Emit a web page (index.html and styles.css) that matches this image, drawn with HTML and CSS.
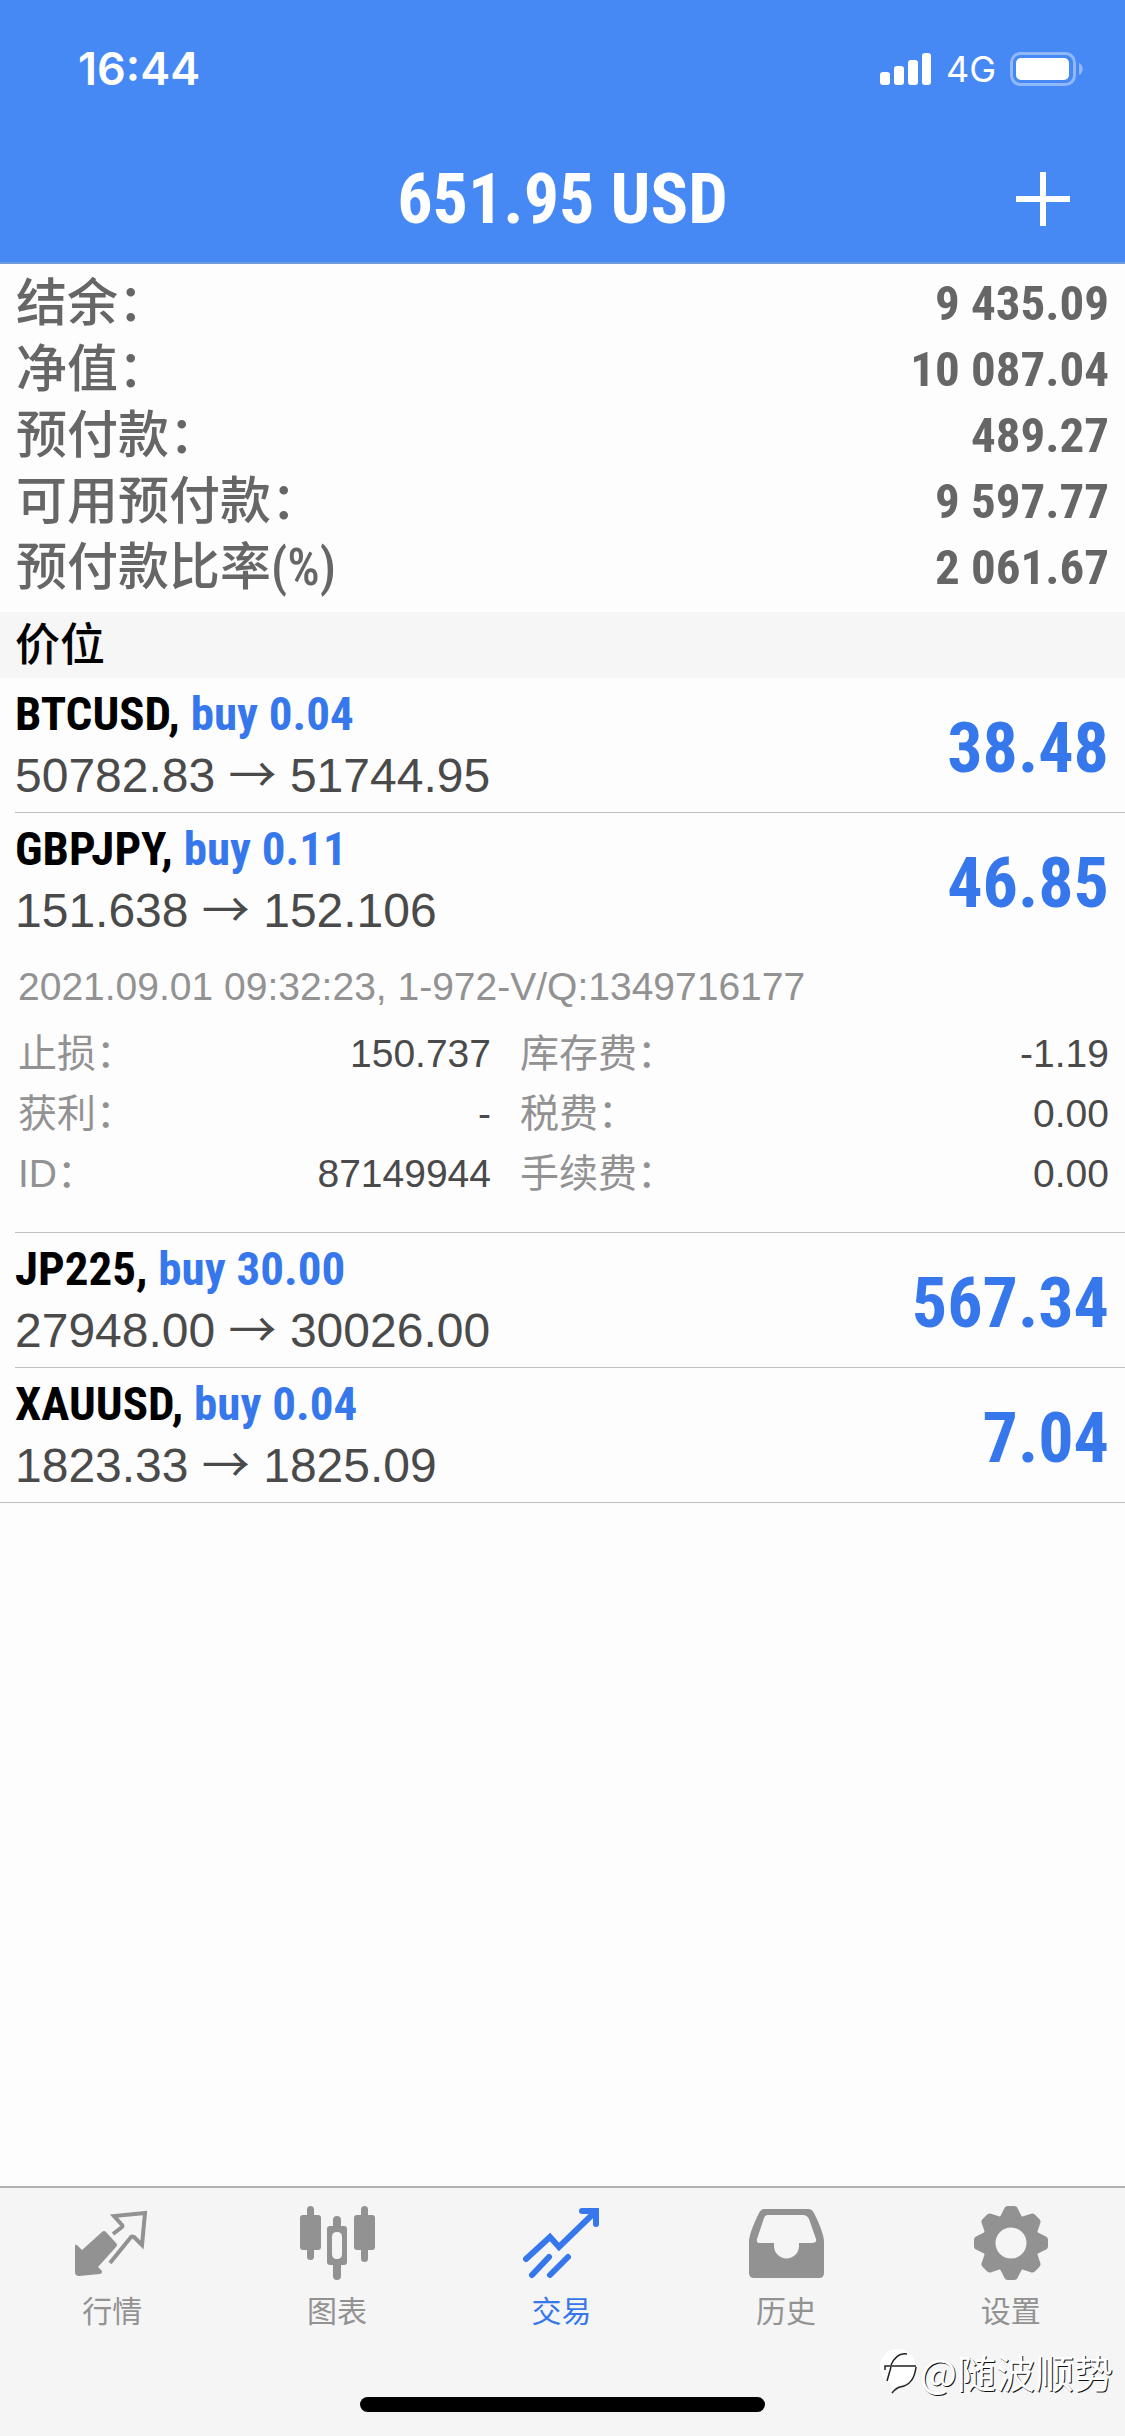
FILE: index.html
```html
<!DOCTYPE html>
<html lang="zh-CN">
<head>
<meta charset="utf-8">
<meta name="viewport" content="width=device-width, initial-scale=1">
<title>交易</title>
<link rel="stylesheet" href="styles.css">
</head>
<body>
<div class="app">
  <header class="header">
    <div class="status">
      <time class="clock">16:44</time>
      <div class="signals">
        <svg class="bars" width="52" height="34" viewBox="0 0 52 34" fill="#fff" aria-hidden="true"><rect x="0" y="20" width="10" height="13" rx="3"/><rect x="14" y="14" width="10" height="19" rx="3"/><rect x="28" y="8" width="10" height="25" rx="3"/><rect x="42" y="1" width="9" height="32" rx="3"/></svg>
        <span class="network">4G</span>
        <svg class="battery" width="74" height="34" viewBox="0 0 74 34" aria-hidden="true"><rect x="1.500" y="1.500" width="63" height="31" rx="9" fill="none" stroke="#fff" stroke-opacity=".4" stroke-width="3"/><rect x="6" y="6" width="53" height="22" rx="5" fill="#fff"/><path d="M69 11v12c5-2 5-10 0-12z" fill="#fff" fill-opacity=".4"/></svg>
      </div>
    </div>
    <div class="titlebar">
      <h1 class="title">651.95 USD</h1>
      <button class="add" type="button" aria-label="添加"><svg width="56" height="56" viewBox="0 0 56 56" stroke="#fff" stroke-width="6"><path d="M28 1v54M1 28h54"/></svg></button>
    </div>
  </header>

  <main class="content">
    <dl class="summary">
      <div class="summary-row"><dt>结余：</dt><dd>9 435.09</dd></div>
      <div class="summary-row"><dt>净值：</dt><dd>10 087.04</dd></div>
      <div class="summary-row"><dt>预付款：</dt><dd>489.27</dd></div>
      <div class="summary-row"><dt>可用预付款：</dt><dd>9 597.77</dd></div>
      <div class="summary-row"><dt>预付款比率(%)</dt><dd>2 061.67</dd></div>
    </dl>
    <h2 class="section">价位</h2>
    <ul class="positions">
      <li class="position">
        <div class="deal">
          <div class="info"><h3 class="symbol">BTCUSD, <span class="side">buy 0.04</span></h3><p class="prices">50782.83 <span class="arrow">→</span> 51744.95</p></div>
          <strong class="profit">38.48</strong>
        </div>
      </li>
      <li class="position">
        <div class="deal">
          <div class="info"><h3 class="symbol">GBPJPY, <span class="side">buy 0.11</span></h3><p class="prices">151.638 <span class="arrow">→</span> 152.106</p></div>
          <strong class="profit">46.85</strong>
        </div>
        <div class="details">
          <p class="opened">2021.09.01 09:32:23, 1-972-V/Q:1349716177</p>
          <dl class="facts">
            <div class="fact"><dt>止损：</dt><dd>150.737</dd></div>
            <div class="fact"><dt>库存费：</dt><dd>-1.19</dd></div>
            <div class="fact"><dt>获利：</dt><dd>-</dd></div>
            <div class="fact"><dt>税费：</dt><dd>0.00</dd></div>
            <div class="fact"><dt>ID：</dt><dd>87149944</dd></div>
            <div class="fact"><dt>手续费：</dt><dd>0.00</dd></div>
          </dl>
        </div>
      </li>
      <li class="position">
        <div class="deal">
          <div class="info"><h3 class="symbol">JP225, <span class="side">buy 30.00</span></h3><p class="prices">27948.00 <span class="arrow">→</span> 30026.00</p></div>
          <strong class="profit">567.34</strong>
        </div>
      </li>
      <li class="position">
        <div class="deal">
          <div class="info"><h3 class="symbol">XAUUSD, <span class="side">buy 0.04</span></h3><p class="prices">1823.33 <span class="arrow">→</span> 1825.09</p></div>
          <strong class="profit">7.04</strong>
        </div>
      </li>
    </ul>
  </main>

  <footer class="footer">
    <nav class="tabs">
      <a class="tab" href="#quotes">
        <svg width="76" height="76" viewBox="0 0 76 76" fill="currentColor" aria-hidden="true"><path d="M1 41q0-3 3 0l4 4 20-18q2-2 4 0l10 11q2 2 0 4L24 62l4 4q0 3-2 3l-21 2q-4 0-4-4z"/><path d="M39 29l9-7q1-1 0-2l-8-9 31-3-3 32-8-8q-2-1-3 0L36 58" fill="none" stroke="currentColor" stroke-width="4"/></svg>
        <span>行情</span>
      </a>
      <a class="tab" href="#charts">
        <svg width="76" height="76" viewBox="0 0 76 76" fill="currentColor" aria-hidden="true"><rect x="8" y="1" width="7" height="54" rx="3.500"/><rect x="1" y="10" width="21" height="35" rx="3"/><rect x="62" y="1" width="7" height="56" rx="3.500"/><rect x="55" y="10" width="21" height="35" rx="3"/><path fill-rule="evenodd" d="M38 11q4 0 4 4v6h3q3 0 3 3v33q0 3-3 3h-3v11q0 4-4 4t-4-4V60h-3q-3 0-3-3V24q0-3 3-3h3v-6q0-4 4-4zM38 27q-5 0-5 5v17q0 5 5 5t5-5V32q0-5-5-5z"/></svg>
        <span>图表</span>
      </a>
      <a class="tab active" href="#trade" aria-current="page">
        <svg width="76" height="76" viewBox="0 0 76 76" fill="none" stroke="currentColor" stroke-width="6" stroke-linecap="round" aria-hidden="true"><path d="M3 54l24-22 9 10L71 8M59 6h14v13" stroke-linejoin="miter"/><path d="M9 70l17-18M27 70l18-18"/></svg>
        <span>交易</span>
      </a>
      <a class="tab" href="#history">
        <svg width="76" height="76" viewBox="0 0 76 76" fill="currentColor" aria-hidden="true"><path fill-rule="evenodd" d="M16 4h44q4 0 6 4 10 20 10 29v31q0 5-5 5H6q-5 0-5-5V37Q1 28 11 8q2-4 5-4zM20 10q-3 0-4 3L9 34q-1 4 3 4h14v3a12 12 0 0 0 25 0v-3h13q5 0 4-4l-7-20q-2-4-6-4z"/></svg>
        <span>历史</span>
      </a>
      <a class="tab" href="#settings">
        <svg width="76" height="76" viewBox="0 0 76 76" fill="currentColor" aria-hidden="true"><defs><path id="tooth" d="M26 14l5-10q1-3 4-3h6q3 0 4 3l5 10z"/></defs><use href="#tooth"/><use href="#tooth" transform="rotate(45 38 38)"/><use href="#tooth" transform="rotate(90 38 38)"/><use href="#tooth" transform="rotate(135 38 38)"/><use href="#tooth" transform="rotate(180 38 38)"/><use href="#tooth" transform="rotate(225 38 38)"/><use href="#tooth" transform="rotate(270 38 38)"/><use href="#tooth" transform="rotate(315 38 38)"/><circle cx="38" cy="38" r="22" fill="none" stroke="currentColor" stroke-width="13"/></svg>
        <span>设置</span>
      </a>
    </nav>
    <div class="home"></div>
    <div class="credit">
      <svg width="42" height="48" viewBox="0 0 42 48" aria-hidden="true"><path d="M20 2a18 18 0 1 1 0 36l-6 8V37A18 18 0 0 1 20 2z" fill="#fff"/><path d="M7 23v-4h31M13 18Q19 5 29 7M13 20L9 34M38 20q-2 18-16 20-4 1-8 6" fill="none" stroke="#222" stroke-width="1.500"/></svg>
      <span>@随波顺势</span>
    </div>
  </footer>
</div>
</body>
</html>
```
FILE: styles.css
```css
* { box-sizing: border-box; margin: 0; padding: 0; }

body {
  background: #fdfdfe;
  font-family: "Liberation Sans", "Noto Sans CJK SC", sans-serif;
  color: #4a4a4b;
}

.app { display: flex; flex-direction: column; min-height: 100vh; }

.header { background: #4689f5; color: #fff; border-bottom: 2px solid #6f9add; }

.status {
  display: flex;
  justify-content: space-between;
  align-items: center;
  height: 136px;
  padding: 2px 41px 0 78px;
}
.clock { font: 600 45px/52px Inter, sans-serif; }
.signals { display: flex; align-items: center; gap: 14px; }
.network { font: 400 36px/44px Inter, sans-serif; }

.titlebar {
  display: grid;
  grid-template-columns: 1fr auto 1fr;
  align-items: center;
  height: 126px;
  padding: 0 54px;
}
.title {
  grid-column: 2;
  font: 700 70px/80px "Roboto Condensed", Roboto, sans-serif;
}
.add {
  justify-self: end;
  display: flex;
  border: 0;
  background: none;
}

.content { flex: 1; }

.summary { padding: 7px 16px 11px; }
.summary-row {
  display: flex;
  justify-content: space-between;
  align-items: center;
  height: 66px;
  color: #666667;
}
.summary-row dt { font: 500 51px/68px "Roboto Condensed", "Noto Sans CJK SC", sans-serif; }
.summary-row dd { font: 700 49px/66px "Roboto Condensed", Roboto, sans-serif; }

.section {
  padding: 1px 15px 0;
  background: #f6f6f6;
  color: #000;
  font: 500 45px/65px "Roboto Condensed", "Noto Sans CJK SC", sans-serif;
}

.positions { list-style: none; border-bottom: 1px solid #c0c0c1; }
.position { margin-left: 15px; }
.position + .position { border-top: 1px solid #c0c0c1; }
.deal {
  display: flex;
  justify-content: space-between;
  align-items: center;
  height: 134px;
  padding: 1px 16px 0 0;
}
.symbol {
  color: #000;
  font: 700 47px/60px "Roboto Condensed", Roboto, sans-serif;
}
.side, .profit { color: #3678ec; }
.prices { font-size: 48px; line-height: 64px; }
.arrow { font-family: "Noto Sans CJK SC", sans-serif; line-height: 1; }
.profit {
  padding-top: 4px;
  font: 700 70px/80px "Roboto Condensed", Roboto, sans-serif;
}

.details { padding: 10px 16px 28px 3px; }
.opened { color: #929293; font-size: 39px; line-height: 60px; }
.facts {
  display: grid;
  grid-template-columns: 473fr 589fr;
  column-gap: 29px;
  margin-top: 7px;
}
.fact {
  display: flex;
  justify-content: space-between;
  font-size: 39px;
  line-height: 60px;
}
.fact dt { color: #929293; }

.footer {
  position: relative;
  display: flex;
  flex-direction: column;
  height: 250px;
  border-top: 2px solid #b0b0b0;
  background: #f5f5f5;
}
.tabs { display: flex; padding-right: 2px; }
.tab {
  flex: 1;
  display: flex;
  flex-direction: column;
  align-items: center;
  padding-top: 17px;
  gap: 9px;
  color: #929292;
  font: 400 30px/44px Roboto, "Noto Sans CJK SC", sans-serif;
  text-decoration: none;
}
.tab.active { color: #3678ec; }
.home {
  width: 36%;
  height: 15px;
  margin: auto auto 24px;
  border-radius: 8px;
  background: #000;
}
.credit {
  position: absolute;
  right: 12px;
  bottom: 37px;
  display: flex;
  align-items: center;
  color: #fff;
  font: 400 39px/56px "Noto Sans CJK SC", sans-serif;
  text-shadow: 1px 1px 0 #111;
}
```
